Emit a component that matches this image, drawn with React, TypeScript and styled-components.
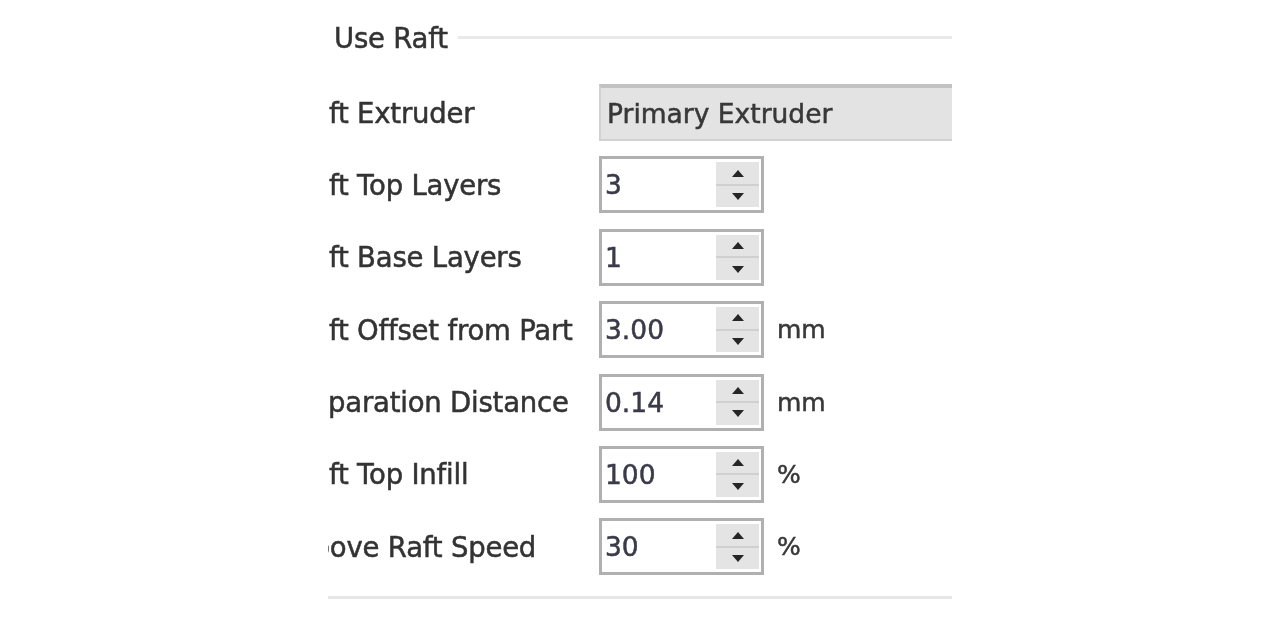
import styled, { createGlobalStyle } from "styled-components";

const Global = createGlobalStyle`
  html, body {
    margin: 0;
    padding: 0;
    background: #ffffff;
  }
  body {
    font-family: "DejaVu Sans", Verdana, sans-serif;
    color: #2e2e2e;
  }
`;

const Page = styled.div`
  width: 1280px;
  height: 625px;
  overflow: hidden;
  background: #fff;
  padding-top: 22px;
  box-sizing: border-box;
`;

const Panel = styled.section`
  width: 624px;
  margin-left: 328px;
  overflow: hidden;
  filter: blur(0.7px);
  -webkit-text-stroke: 0.5px currentColor;
`;

const GroupHeader = styled.div`
  display: flex;
  align-items: center;
  height: 32px;
  padding-left: 6px;
  font-size: 27.5px;
  letter-spacing: -0.2px;
  color: #333;
`;

const GroupLine = styled.div`
  flex: 1;
  height: 3px;
  margin-left: 10px;
  margin-top: -2px;
  background: #e9e9e9;
`;

const Grid = styled.div`
  display: grid;
  grid-template-columns: 305px 1fr;
  grid-auto-rows: 57px;
  row-gap: 15.4px;
  margin-left: -34px;
  margin-top: 30px;
  align-items: center;
`;

const Label = styled.div`
  font-size: 27.5px;
  letter-spacing: -0.2px;
  white-space: nowrap;
  color: #333;
`;

const FieldCell = styled.div`
  display: flex;
  align-items: center;
  height: 100%;
`;

const Combo = styled.div`
  flex: 1;
  height: 57px;
  box-sizing: border-box;
  background: #e3e3e3;
  border: 2px solid #d2d2d2;
  border-top: 4px solid #c2c2c2;
  display: flex;
  align-items: center;
  padding-left: 6px;
  font-size: 26.5px;
  color: #383838;
  margin-right: -40px;
`;

const Spin = styled.div`
  width: 165px;
  height: 57px;
  box-sizing: border-box;
  border: 3px solid #b0b0b0;
  background: #fff;
  display: flex;
`;

const SpinValue = styled.div`
  flex: 1;
  display: flex;
  align-items: center;
  padding-left: 3px;
  font-size: 26.5px;
  color: #3a3a48;
`;

const SpinButtons = styled.div`
  width: 43px;
  margin: 3px 2px 3px 0;
  background: #e4e4e4;
  display: flex;
  flex-direction: column;
`;

const SpinHalf = styled.div<{ $top?: boolean }>`
  flex: 1;
  display: flex;
  align-items: center;
  justify-content: center;
  border-bottom: ${(p) => (p.$top ? "2px solid #d0d0d0" : "none")};
`;

const Unit = styled.div`
  margin-left: 13px;
  font-size: 25px;
  color: #383838;
`;

const Divider = styled.div`
  height: 3px;
  background: #e6e6e6;
  margin-top: 21px;
`;

const Arrow = ({ up }: { up?: boolean }) => (
  <svg width="14" height="9" viewBox="0 0 14 9">
    <path d={up ? "M7 1 L13 8 L1 8 Z" : "M1 1 L13 1 L7 8 Z"} fill="#262626" />
  </svg>
);

const SpinBox = ({ value }: { value: string }) => (
  <Spin>
    <SpinValue>{value}</SpinValue>
    <SpinButtons>
      <SpinHalf $top>
        <Arrow up />
      </SpinHalf>
      <SpinHalf>
        <Arrow />
      </SpinHalf>
    </SpinButtons>
  </Spin>
);

const rows = [
  { label: "Raft Top Layers", value: "3" },
  { label: "Raft Base Layers", value: "1" },
  { label: "Raft Offset from Part", value: "3.00", unit: "mm" },
  { label: "Separation Distance", value: "0.14", unit: "mm" },
  { label: "Raft Top Infill", value: "100", unit: "%" },
  { label: "Above Raft Speed", value: "30", unit: "%" },
];

export default function App() {
  return (
    <>
      <Global />
      <Page>
        <Panel>
          <GroupHeader>
            Use Raft
            <GroupLine />
          </GroupHeader>
          <Grid>
            <Label>Raft Extruder</Label>
            <FieldCell>
              <Combo>Primary Extruder</Combo>
            </FieldCell>
            {rows.map((r) => [
              <Label key={r.label}>{r.label}</Label>,
              <FieldCell key={r.label + "-field"}>
                <SpinBox value={r.value} />
                {r.unit && <Unit>{r.unit}</Unit>}
              </FieldCell>,
            ])}
          </Grid>
          <Divider />
        </Panel>
      </Page>
    </>
  );
}
